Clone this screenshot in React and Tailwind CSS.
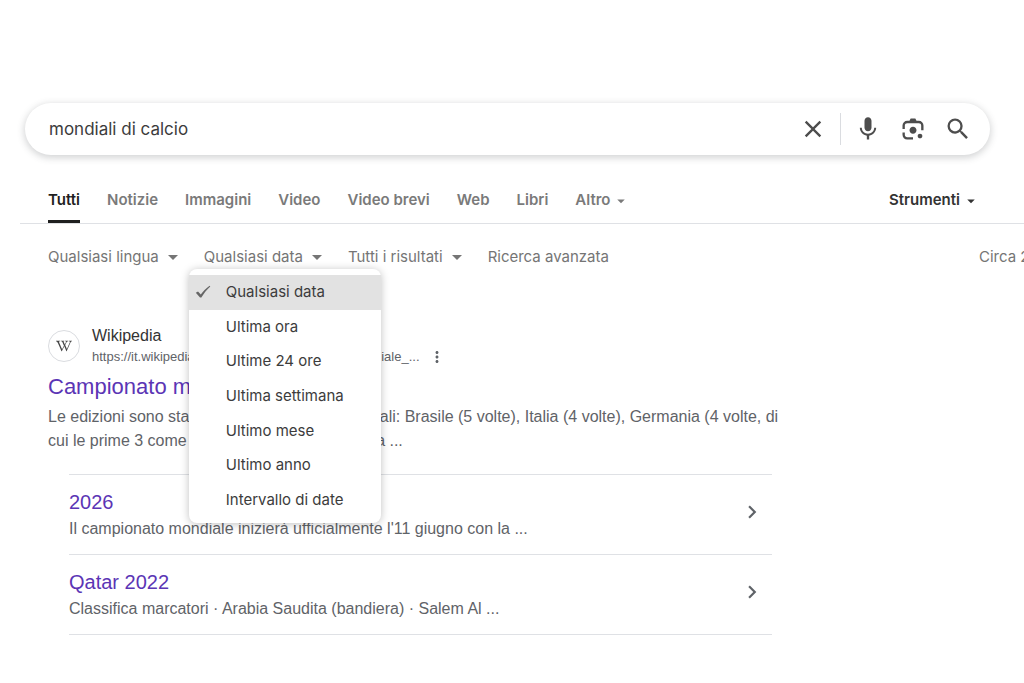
import { useState } from "react";
import { FaWikipediaW } from "react-icons/fa";
import { MdArrowDropDown, MdChevronRight, MdClose, MdMic, MdMoreVert, MdSearch } from "react-icons/md";

const tabs = ["Tutti", "Notizie", "Immagini", "Video", "Video brevi", "Web", "Libri"];

const dateOptions = [
  "Qualsiasi data",
  "Ultima ora",
  "Ultime 24 ore",
  "Ultima settimana",
  "Ultimo mese",
  "Ultimo anno",
  "Intervallo di date",
];

const sitelinks = [
  { title: "2026", text: "Il campionato mondiale inizierà ufficialmente l'11 giugno con la ..." },
  { title: "Qatar 2022", text: "Classifica marcatori · Arabia Saudita (bandiera) · Salem Al ..." },
];

function LensIcon() {
  return (
    <svg viewBox="0 -960 960 960" className="size-7" fill="currentColor" aria-hidden="true">
      <path d="M480-320q-50 0-85-35t-35-85q0-50 35-85t85-35q50 0 85 35t35 85q0 50-35 85t-85 35Zm240 160q-33 0-56.5-23.5T640-240q0-33 23.5-56.5T720-320q33 0 56.5 23.5T800-240q0 33-23.5 56.5T720-160Zm-440 40q-66 0-113-47t-47-113v-80h80v80q0 33 23.5 56.5T280-200h200v80H280Zm480-320v-160q0-33-23.5-56.5T680-680H280q-33 0-56.5 23.5T200-600v120h-80v-120q0-66 47-113t113-47h80l40-80h160l40 80h80q66 0 113 47t47 113v160h-80Z" />
    </svg>
  );
}

function CheckIcon() {
  return (
    <svg viewBox="0 0 16 14" className="h-[14px] w-4" fill="currentColor" aria-hidden="true">
      <path d="M.8 7.8 3 6.6 5.8 9.4C8.4 6 11 3.4 14.6.8L15.3 1.5C11.8 4.6 9 8.2 6.4 12.6H5Z" />
    </svg>
  );
}

function SearchBar() {
  const [query, setQuery] = useState("mondiali di calcio");

  return (
    <form
      role="search"
      onSubmit={(e) => e.preventDefault()}
      className="ml-[25px] mr-[34px] flex h-[52px] items-center rounded-full bg-white pl-6 pr-[18px] text-[#4d4d4d] shadow-[0_2px_7px_1px_rgba(60,64,67,0.22)]"
    >
      <input
        aria-label="Cerca"
        value={query}
        onChange={(e) => setQuery(e.target.value)}
        className="min-w-0 flex-1 bg-transparent pt-[2px] text-[17px] text-[#3c3c3c] outline-none"
      />
      <button type="button" aria-label="Cancella" onClick={() => setQuery("")} className="mr-[13px]">
        <MdClose size={28} />
      </button>
      <div className="mr-[13px] h-8 w-px bg-[#dadce0]" />
      <div className="flex items-center gap-[17px]">
        <button type="button" aria-label="Ricerca vocale">
          <MdMic size={28} />
        </button>
        <button type="button" aria-label="Ricerca con le immagini">
          <LensIcon />
        </button>
        <button type="submit" aria-label="Cerca">
          <MdSearch size={28} />
        </button>
      </div>
    </form>
  );
}

function Tabs() {
  return (
    <nav className="ml-5 mt-[23px] flex h-[46px] items-stretch border-b border-[#dfe1e5] pl-7 pr-[44px] text-[15px] font-semibold text-[#7a7a7a]">
      <div className="flex gap-[27px]">
        {tabs.map((tab, i) => (
          <a
            key={tab}
            href="#"
            className={
              i === 0
                ? "flex items-center border-b-[3px] border-[#1f1f1f] pt-[3px] text-[#1f1f1f]"
                : "flex items-center"
            }
          >
            {tab}
          </a>
        ))}
        <button type="button" className="flex items-center gap-[2px]">
          Altro <MdArrowDropDown size={18} />
        </button>
      </div>
      <button type="button" className="ml-auto flex items-center gap-[2px] text-[#333333]">
        Strumenti <MdArrowDropDown size={18} />
      </button>
    </nav>
  );
}

function DateMenu({ selected, onSelect }) {
  return (
    <ul
      role="menu"
      className="absolute -left-[15px] top-full z-10 grid h-[254px] w-[192px] grid-rows-7 rounded-lg bg-white py-[6px] text-[#3c3c3c] shadow-[0_1px_8px_rgba(0,0,0,0.25)]"
    >
      {dateOptions.map((option) => (
        <li key={option} role="none">
          <button
            type="button"
            role="menuitemradio"
            aria-checked={option === selected}
            onClick={() => onSelect(option)}
            className={
              option === selected
                ? "flex h-full w-full items-center bg-[#e2e2e2] pl-[6px]"
                : "flex h-full w-full items-center pl-[6px]"
            }
          >
            <span className="w-[31px] text-[#666666]">{option === selected && <CheckIcon />}</span>
            {option}
          </button>
        </li>
      ))}
    </ul>
  );
}

function Filters() {
  const [date, setDate] = useState("Qualsiasi data");
  const [open, setOpen] = useState(true);

  return (
    <div className="mt-[21px] flex items-center pl-12 text-[15px] leading-6 text-[#757575]">
      <div className="flex items-center gap-[19px]">
        <button type="button" className="flex items-center gap-[2px]">
          Qualsiasi lingua <MdArrowDropDown size={24} />
        </button>
        <div className="relative">
          <button
            type="button"
            aria-expanded={open}
            onClick={() => setOpen(!open)}
            className="flex items-center gap-[2px]"
          >
            {date} <MdArrowDropDown size={24} />
          </button>
          {open && <DateMenu selected={date} onSelect={setDate} />}
        </div>
        <button type="button" className="flex items-center gap-[2px]">
          Tutti i risultati <MdArrowDropDown size={24} />
        </button>
        <a href="#">Ricerca avanzata</a>
      </div>
      <div className="ml-auto w-[45px] shrink-0 overflow-hidden whitespace-nowrap">Circa 2</div>
    </div>
  );
}

function Result() {
  return (
    <article className="ml-12 mt-14 max-w-[732px] font-['Liberation_Sans',Arial,sans-serif] text-base text-[#5f6368]">
      <div className="flex items-center">
        <div className="mr-3 flex size-8 items-center justify-center rounded-full border border-[#dadce0] text-[#444444]">
          <FaWikipediaW size={16} />
        </div>
        <div>
          <div className="leading-[21px] text-[#333333]">Wikipedia</div>
          <div className="flex items-center text-[13px] leading-[21px]">
            https://it.wikipedia.org <span className="px-[6px]">›</span> wiki <span className="px-[6px]">›</span>{" "}
            Campionato_mondiale_...
            <button type="button" aria-label="Altre opzioni" className="ml-2">
              <MdMoreVert size={18} />
            </button>
          </div>
        </div>
      </div>
      <h3 className="mb-[5px] mt-[7px] text-[22px] leading-[26px]">
        <a href="#" className="text-[#5b35b5]">Campionato mondiale di calcio</a>
      </h3>
      <p className="leading-6">
        Le edizioni sono state vinte solo da otto nazionali: Brasile (5 volte), Italia (4 volte), Germania (4 volte, di
        cui le prime 3 come Germania Ovest) Argentina ...
      </p>
      <ul className="ml-[21px] mr-2 mt-[21px] border-t border-[#dfe1e5]">
        {sitelinks.map((link) => (
          <li key={link.title} className="flex h-20 items-center border-b border-[#dfe1e5] pr-[7px]">
            <div className="flex-1">
              <a href="#" className="mb-[2px] block text-xl leading-[26px] text-[#5b35b5]">{link.title}</a>
              <div className="leading-6">{link.text}</div>
            </div>
            <MdChevronRight size={26} className="mb-[5px]" />
          </li>
        ))}
      </ul>
    </article>
  );
}

export default function App() {
  return (
    <main className="min-h-screen overflow-x-hidden bg-white pb-12 pt-[103px] font-[Inter,Roboto,sans-serif]">
      <SearchBar />
      <Tabs />
      <Filters />
      <Result />
    </main>
  );
}
